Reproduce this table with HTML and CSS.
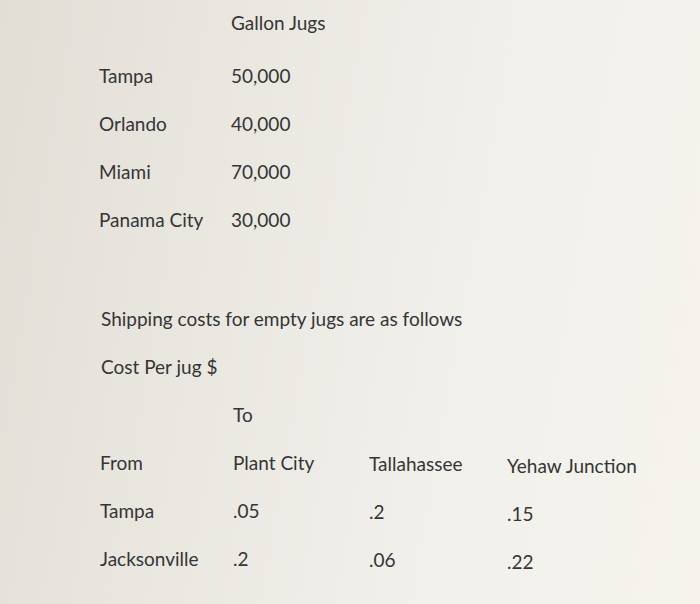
FILE: index.html
```html
<!DOCTYPE html>
<html>
<head>
<meta charset="utf-8">
<link rel="stylesheet" href="styles.css">
</head>
<body>
<div class="sheet">
  <div class="jugs-head"><span></span><span>Gallon Jugs</span></div>
  <div class="jugs">
    <span>Tampa</span><span class="num">50,000</span>
    <span>Orlando</span><span class="num">40,000</span>
    <span>Miami</span><span class="num">70,000</span>
    <span>Panama City</span><span class="num">30,000</span>
  </div>
  <div class="line intro">Shipping costs for empty jugs are as follows</div>
  <div class="line">Cost Per jug $</div>
  <div class="costs">
    <span></span><span>To</span><span></span><span></span>
    <span>From</span><span>Plant City</span><span class="c3">Tallahassee</span><span class="c4">Yehaw Junction</span>
    <span>Tampa</span><span>.05</span><span class="c3">.2</span><span class="c4">.15</span>
    <span>Jacksonville</span><span>.2</span><span class="c3">.06</span><span class="c4">.22</span>
  </div>
</div>
</body>
</html>
```
FILE: styles.css
```css
html, body {
  margin: 0;
  padding: 0;
}
body {
  width: 700px;
  height: 604px;
  overflow: hidden;
  background: linear-gradient(100deg, #e2ded6 0%, #ebe8e2 35%, #f2f0eb 65%, #f5f3ec 100%);
  font-family: Lato, "Open Sans", sans-serif;
  font-size: 19px;
  color: #353535;
}
.sheet {
  padding-left: 99px;
}
.jugs-head {
  display: grid;
  grid-template-columns: 132px auto;
  height: 44px;
  align-items: center;
}
.jugs {
  display: grid;
  grid-template-columns: 132px auto;
  grid-auto-rows: 48px;
  align-items: center;
  margin-top: 7px;
}
.line {
  height: 48px;
  display: flex;
  align-items: center;
  padding-left: 2px;
}
.intro {
  margin-top: 51px;
}
.costs {
  display: grid;
  grid-template-columns: 133px 136px 138px auto;
  grid-auto-rows: 48px;
  align-items: center;
  padding-left: 1px;
}
.c3 {
  padding-top: 3px;
}
.c4 {
  padding-top: 6px;
}
```
